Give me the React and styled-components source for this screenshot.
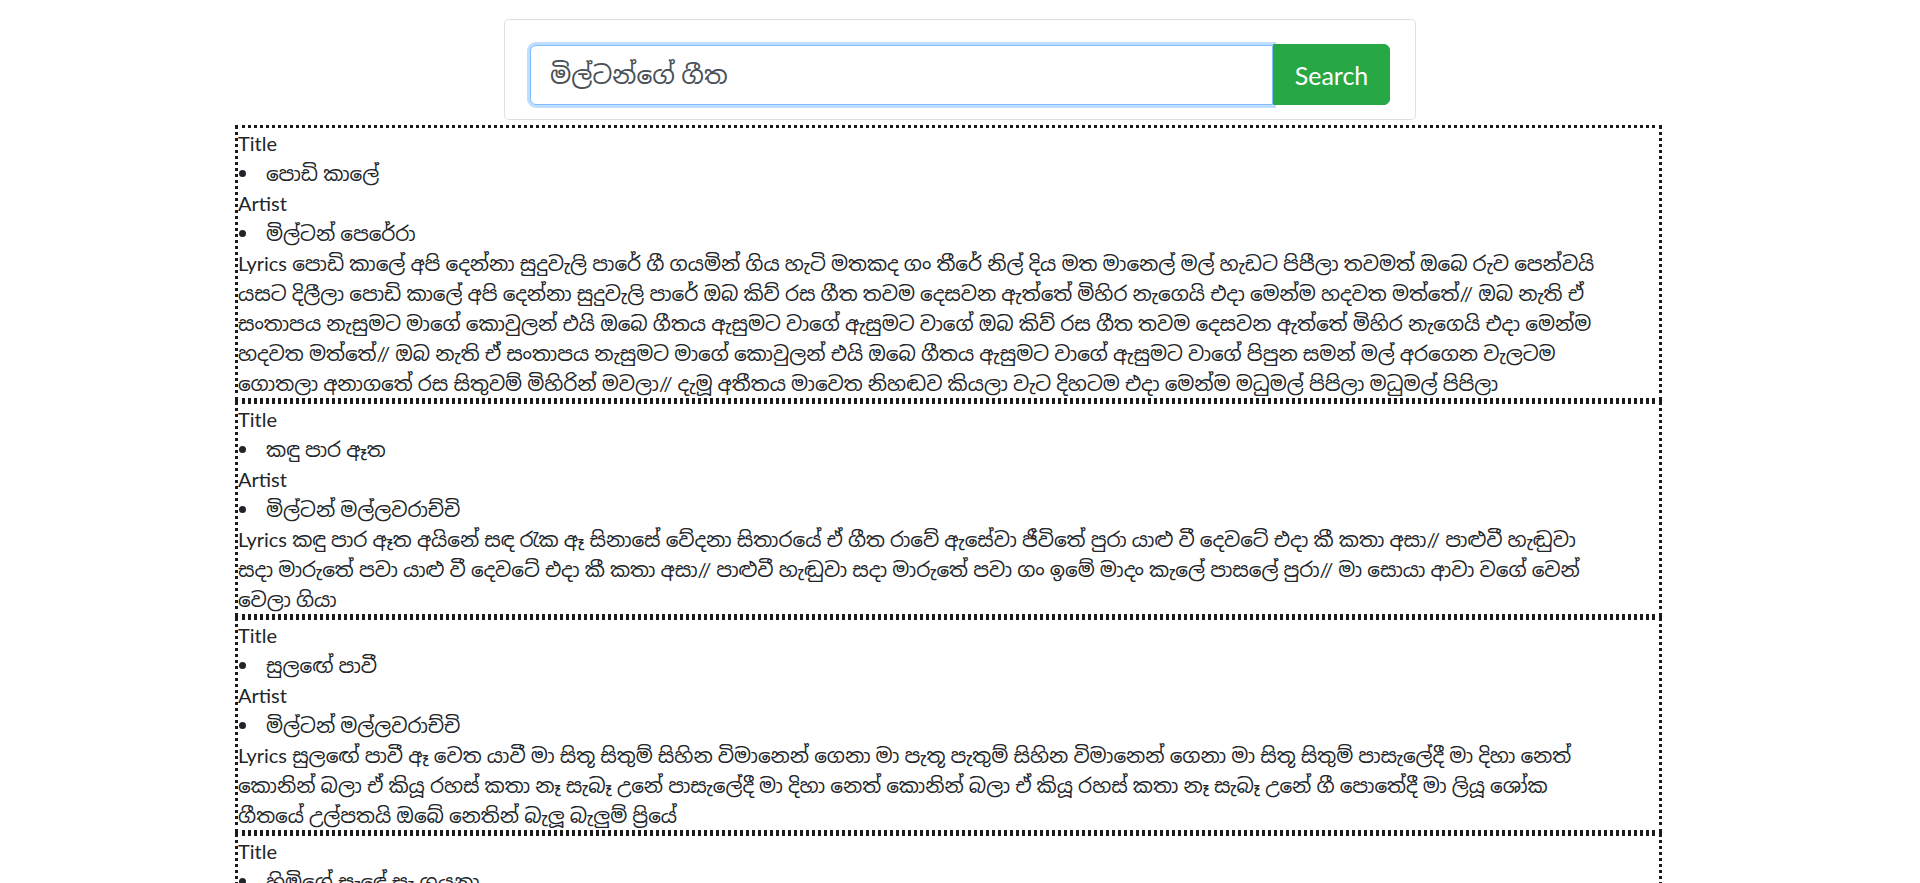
import React, { Fragment } from "react";
import styled, { createGlobalStyle } from "styled-components";

const GlobalStyle = createGlobalStyle`
  html, body { margin: 0; padding: 0; background: #ffffff; }
  body {
    font-family: "Segoe UI", "Lato", "Open Sans", "Noto Sans Sinhala", "Iskoola Pota", sans-serif;
    font-size: 20px;
    line-height: 30px;
    color: #212529;
  }
  * { box-sizing: border-box; }
`;

const Page = styled.div`
  display: flex;
  flex-direction: column;
  padding-top: 19px;
`;

const SearchCard = styled.div`
  width: 912px;
  margin: 0 auto;
  background: #fff;
  border: 1px solid rgba(0, 0, 0, 0.125);
  border-radius: 5px;
  padding: 25px 25px 14px;
`;

const InputGroup = styled.form`
  display: flex;
  align-items: stretch;
  height: 60px;
`;

const SearchInput = styled.input`
  flex: 1;
  min-width: 0;
  height: 60px;
  padding: 10px 19px;
  font-family: inherit;
  font-size: 25px;
  color: #495057;
  background: #fff;
  border: 1px solid #80bdff;
  border-radius: 6px 0 0 6px;
  outline: none;
  box-shadow: 0 0 0 3px rgba(0, 123, 255, 0.25);
`;

const SearchButton = styled.button`
  width: 117px;
  height: 61px;
  margin-top: -1px;
  font-family: inherit;
  font-size: 25px;
  color: #fff;
  background: #28a745;
  border: 1px solid #28a745;
  border-radius: 0 6px 6px 0;
  cursor: pointer;
`;

const Results = styled.div`
  margin: 5px 0 0 235px;
  width: 1427px;
  display: flex;
  flex-direction: column;
`;

const ResultBox = styled.div`
  border: 3px dotted #1b1b1b;
`;

const FieldLabel = styled.div`
  line-height: 30px;
`;

const ValueList = styled.ul`
  margin: 0;
  padding: 0;
  list-style: none;
`;

const ValueItem = styled.li`
  display: flex;
  align-items: center;
  line-height: 30px;
  &::before {
    content: "";
    flex: none;
    width: 7px;
    height: 7px;
    margin: 0 20px 0 1px;
    border-radius: 50%;
    background: #212529;
  }
`;

const LyricsText = styled.div`
  line-height: 30px;
`;

const songs = [
  {
    title: "පොඩි කාලේ",
    artist: "මිල්ටන් පෙරේරා",
    lyrics: [
      "පොඩි කාලේ අපි දෙන්නා සුදුවැලි පාරේ ගී ගයමින් ගිය හැටි මතකද ගං තීරේ නිල් දිය මත මානෙල් මල් හැඩට පිපීලා තවමත් ඔබෙ රුව පෙන්වයි",
      "යසට දිලීලා පොඩි කාලේ අපි දෙන්නා සුදුවැලි පාරේ ඔබ කිව් රස ගීත තවම දෙසවන ඇත්තේ මිහිර නැගෙයි එදා මෙන්ම හදවත මත්තේ// ඔබ නැති ඒ",
      "සංතාපය නැසුමට මාගේ කොවුලන් එයි ඔබෙ ගීතය ඇසුමට වාගේ ඇසුමට වාගේ ඔබ කිව් රස ගීත තවම දෙසවන ඇත්තේ මිහිර නැගෙයි එදා මෙන්ම",
      "හදවත මත්තේ// ඔබ නැති ඒ සංතාපය නැසුමට මාගේ කොවුලන් එයි ඔබෙ ගීතය ඇසුමට වාගේ ඇසුමට වාගේ පිපුන සමන් මල් අරගෙන වැලටම",
      "ගොතලා අනාගතේ රස සිතුවම් මිහිරින් මවලා// දැමූ අතීතය මාවෙත නිහඬව කියලා වැට දිහටම එදා මෙන්ම මධුමල් පිපිලා මධුමල් පිපිලා",
    ],
  },
  {
    title: "කඳු පාර ඈත",
    artist: "මිල්ටන් මල්ලවරාච්චි",
    lyrics: [
      "කඳු පාර ඈත අයිනේ සඳ රැක ඈ සිනාසේ වේදනා සිතාරයේ ඒ ගීත රාවේ ඇසේවා ජීවිතේ පුරා යාළු වී දෙවටේ එදා කී කතා අසා// පාළුවී හැඬුවා",
      "සදා මාරුතේ පවා යාළු වී දෙවටේ එදා කී කතා අසා// පාළුවී හැඬුවා සදා මාරුතේ පවා ගං ඉමේ මාදං කැලේ පාසලේ පුරා// මා සොයා ආවා වගේ වෙන්",
      "වෙලා ගියා",
    ],
  },
  {
    title: "සුලඟේ පාවී",
    artist: "මිල්ටන් මල්ලවරාච්චි",
    lyrics: [
      "සුලඟේ පාවී ඈ වෙත යාවී මා සිතූ සිතුම් සිහින විමානෙන් ගෙනා මා පැතූ පැතුම් සිහින විමානෙන් ගෙනා මා සිතූ සිතුම් පාසැලේදී මා දිහා නෙත්",
      "කොනින් බලා ඒ කියූ රහස් කතා නෑ සැබෑ උනේ පාසැලේදී මා දිහා නෙත් කොනින් බලා ඒ කියූ රහස් කතා නෑ සැබෑ උනේ ගී පොතේදී මා ලියූ ශෝක",
      "ගීතයේ උල්පතයි ඔබේ නෙතින් බැලූ බැලුම් ප්‍රියේ",
    ],
  },
  {
    title: "හිමිගේ සැඳේ සෑ ගයනා",
    artist: "මිල්ටන් මල්ලවරාච්චි",
    lyrics: ["හිමිගේ සැඳේ සෑ ගයනා"],
  },
];

function Song({ song }) {
  return (
    <ResultBox>
      <FieldLabel>Title</FieldLabel>
      <ValueList>
        <ValueItem>{song.title}</ValueItem>
      </ValueList>
      <FieldLabel>Artist</FieldLabel>
      <ValueList>
        <ValueItem>{song.artist}</ValueItem>
      </ValueList>
      <LyricsText>
        Lyrics{" "}
        {song.lyrics.map((line, i) => (
          <Fragment key={i}>
            {line}
            {i < song.lyrics.length - 1 && <br />}
          </Fragment>
        ))}
      </LyricsText>
    </ResultBox>
  );
}

export default function App() {
  return (
    <>
      <GlobalStyle />
      <Page>
        <SearchCard>
          <InputGroup onSubmit={(e) => e.preventDefault()}>
            <SearchInput defaultValue="මිල්ටන්ගේ ගීත" />
            <SearchButton type="submit">Search</SearchButton>
          </InputGroup>
        </SearchCard>
        <Results>
          {songs.map((s, i) => (
            <Song key={i} song={s} />
          ))}
        </Results>
      </Page>
    </>
  );
}
